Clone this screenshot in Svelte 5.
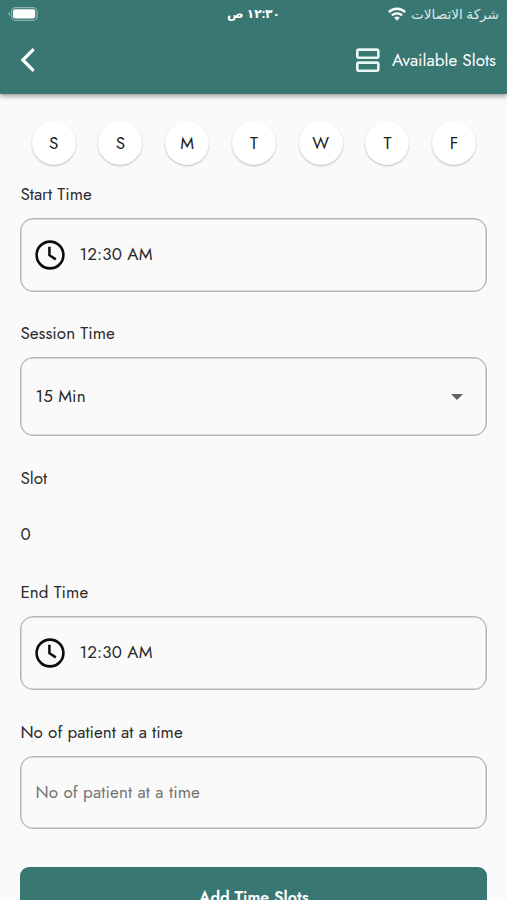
<script lang="ts">
	const days: string[] = ['S', 'S', 'M', 'T', 'W', 'T', 'F'];

	let startTime = '12:30 AM';
	let endTime = '12:30 AM';
	let session = '15 Min';
	let slot = 0;
	let patients = '';
</script>

{#snippet clock()}
	<svg class="clock" viewBox="0 0 30 30" aria-hidden="true">
		<circle cx="15" cy="15" r="13.4" fill="none" stroke="#0c0c0c" stroke-width="2.6" />
		<path d="M14.4 6.8V15.2L20.8 19.4" fill="none" stroke="#0c0c0c" stroke-width="2.5" />
	</svg>
{/snippet}

<div class="screen">
	<header class="header">
		<div class="status">
			<svg class="battery" viewBox="0 0 30 14" aria-hidden="true">
				<path d="M1.9 4.8C.2 5.4.2 8.6 1.9 9.2Z" fill="#9dbbb8" />
				<rect x="3.6" y="0.7" width="25.4" height="12.6" rx="3.8" fill="none" stroke="#8fb1ae" stroke-width="1.2" />
				<rect x="5" y="2.3" width="22.2" height="9.2" rx="2.2" fill="#fff" />
			</svg>
			<span class="clock-text" dir="rtl">١٢:٣٠ ص</span>
			<div class="carrier">
				<svg class="wifi" viewBox="0 0 18 14" aria-hidden="true">
					<path d="M9 13.7L6.2 10.8A4 4 0 0 1 11.8 10.8Z" fill="#fff" />
					<path d="M3.9 8.4A7.2 7.2 0 0 1 14.1 8.4" fill="none" stroke="#fff" stroke-width="2.3" />
					<path d="M.9 5.1A11.6 11.6 0 0 1 17.1 5.1" fill="none" stroke="#fff" stroke-width="2.4" />
				</svg>
				<span class="carrier-name" dir="rtl">شركة الاتصالات</span>
			</div>
		</div>
		<div class="toolbar">
			<button class="back" type="button" aria-label="Back">
				<svg viewBox="0 0 15 24" aria-hidden="true">
					<path d="M13.7 1.2L2.8 12L13.7 22.8" fill="none" stroke="#fff" stroke-width="3.2" />
				</svg>
			</button>
			<button class="available" type="button">
				<svg viewBox="0 0 24 24" aria-hidden="true">
					<rect x="2.2" y="1.6" width="20.2" height="7.8" rx="1.6" />
					<rect x="2.2" y="14" width="20.2" height="7.8" rx="1.6" />
				</svg>
				<span>Available Slots</span>
			</button>
		</div>
	</header>

	<main class="form">
		<div class="days">
			{#each days as day}
				<div class="day-cell">
					<button class="day" type="button">{day}</button>
				</div>
			{/each}
		</div>

		<div class="label start-label">Start Time</div>
		<button class="field" type="button">
			{@render clock()}
			<span class="value">{startTime}</span>
		</button>

		<div class="label">Session Time</div>
		<button class="field select" type="button">
			<span class="value">{session}</span>
			<svg class="caret" viewBox="0 0 12 6" aria-hidden="true">
				<path d="M0 0H12L6 6Z" fill="#616161" />
			</svg>
		</button>

		<div class="label slot-label">Slot</div>
		<div class="slot">{slot}</div>

		<div class="label end-label">End Time</div>
		<button class="field" type="button">
			{@render clock()}
			<span class="value">{endTime}</span>
		</button>

		<div class="label">No of patient at a time</div>
		<input class="field input" bind:value={patients} placeholder="No of patient at a time" />

		<button class="submit" type="button">Add Time Slots</button>
	</main>
</div>

<style>
	:global(body) {
		background: #fafafa;
	}

	.screen {
		height: 900px;
		overflow: hidden;
		background: #fafafa;
		color: #2b2b2b;
		font-family: Jost, Lato, sans-serif;
		font-size: 17px;
	}

	button,
	input {
		box-sizing: border-box;
		margin: 0;
		padding: 0;
		border: none;
		background: none;
		color: inherit;
		font: inherit;
	}

	.header {
		height: 94px;
		background: #397772;
		color: #fff;
		box-shadow: 0 2px 5px rgba(0, 0, 0, 0.4);
	}

	.status {
		display: grid;
		grid-template-columns: 1fr auto 1fr;
		align-items: center;
		height: 27px;
		padding: 0 8px;
		font-family: 'Noto Sans', 'DejaVu Sans', sans-serif;
		font-size: 13px;
		line-height: 27px;
	}

	.battery {
		width: 30px;
		height: 14px;
	}

	.clock-text {
		font-size: 12.3px;
		font-weight: 700;
	}

	.carrier {
		display: flex;
		align-items: center;
		justify-content: flex-end;
		gap: 5px;
	}

	.wifi {
		width: 18px;
		height: 14px;
	}

	.carrier-name {
		color: #dfe9e8;
		font-size: 13.6px;
	}

	.toolbar {
		display: flex;
		align-items: center;
		justify-content: space-between;
		height: 66px;
		padding: 0 11px 0 20px;
	}

	.back,
	.back svg {
		display: block;
		width: 15px;
		height: 24px;
	}

	.available {
		display: flex;
		align-items: center;
		gap: 12px;
		letter-spacing: 0.04px;
	}

	.available svg {
		width: 25px;
		height: 25px;
		fill: none;
		stroke: #e9f6f5;
		stroke-width: 2.5;
	}

	.form {
		padding: 27px 19.6px 0 20.4px;
	}

	.days {
		display: flex;
	}

	.day-cell {
		display: flex;
		flex: 1;
		justify-content: center;
	}

	.day {
		width: 44px;
		height: 44px;
		border-radius: 50%;
		background: #fff;
		box-shadow: 0 1px 2px rgba(0, 0, 0, 0.25);
		color: #1c1c1c;
	}

	.label {
		margin: 29.7px 0 12px;
		line-height: 24px;
		letter-spacing: 0.05px;
	}

	.start-label {
		margin-top: 17.2px;
	}

	.field {
		display: flex;
		align-items: center;
		width: 100%;
		height: 73.5px;
		padding: 0 14px;
		border: 1px solid #b4b4b4;
		border-radius: 13px;
		box-shadow: inset 0 0 0 0.5px #b4b4b4;
		text-align: left;
		letter-spacing: 0.15px;
	}

	.value {
		padding-bottom: 2px;
	}

	.clock {
		width: 30px;
		height: 30px;
		margin-right: 14px;
	}

	.select {
		justify-content: space-between;
		height: 78.6px;
		padding-right: 23px;
	}

	.select .value {
		padding-bottom: 1px;
	}

	.caret {
		width: 12px;
		height: 6px;
	}

	.slot-label {
		margin-bottom: 32px;
	}

	.slot {
		line-height: 24px;
	}

	.end-label {
		margin-top: 34.7px;
	}

	.input {
		padding-bottom: 1px;
	}

	.input::placeholder {
		color: #747474;
		opacity: 1;
	}

	.submit {
		display: block;
		width: 100%;
		height: 60px;
		margin-top: 38px;
		border-radius: 9px;
		background: #397772;
		color: #fff;
		font-size: 16px;
		font-weight: 600;
	}
</style>
